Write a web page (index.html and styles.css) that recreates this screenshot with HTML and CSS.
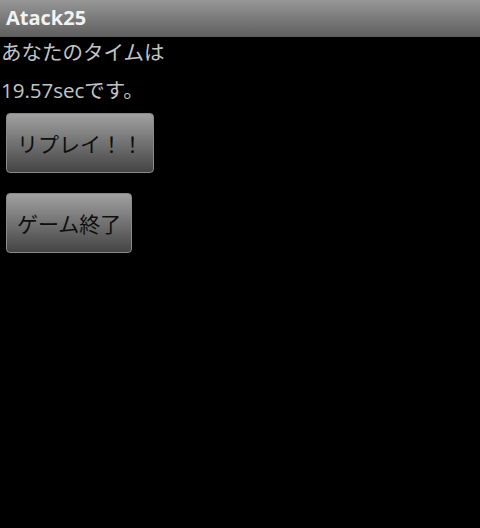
FILE: index.html
```html
<!DOCTYPE html>
<html lang="ja">
<head>
<meta charset="utf-8">
<link rel="stylesheet" href="styles.css">
</head>
<body>
<div class="titlebar">Atack25</div>
<div class="content">
  <div class="line">あなたのタイムは</div>
  <div class="line">19.57secです。</div>
  <div class="buttons">
    <button class="btn">リプレイ！！</button>
    <button class="btn">ゲーム終了</button>
  </div>
</div>
</body>
</html>
```
FILE: styles.css
```css
html, body {
  margin: 0;
  padding: 0;
  background: #000;
  width: 480px;
  height: 528px;
  overflow: hidden;
}
body {
  font-family: "Open Sans", "Noto Sans CJK JP", sans-serif;
}
.titlebar {
  height: 37px;
  box-sizing: border-box;
  padding-left: 6px;
  background: linear-gradient(#979797, #5e5e5e);
  color: #f2f2f2;
  font-weight: bold;
  font-size: 20px;
  line-height: 36px;
}
.content {
  padding-left: 1px;
}
.line {
  color: #c4c4c4;
  font-size: 20.5px;
  height: 38px;
  line-height: 30px;
}
.buttons {
  display: flex;
  flex-direction: column;
  align-items: flex-start;
  gap: 20px;
  padding-left: 5px;
}
.btn {
  height: 60px;
  padding: 0 10px;
  border: 1px solid #8a8a8a;
  border-radius: 4px;
  background: linear-gradient(#a0a0a0, #444);
  color: #0e0e0e;
  font-family: "Noto Sans CJK JP", sans-serif;
  font-size: 21px;
}
```
